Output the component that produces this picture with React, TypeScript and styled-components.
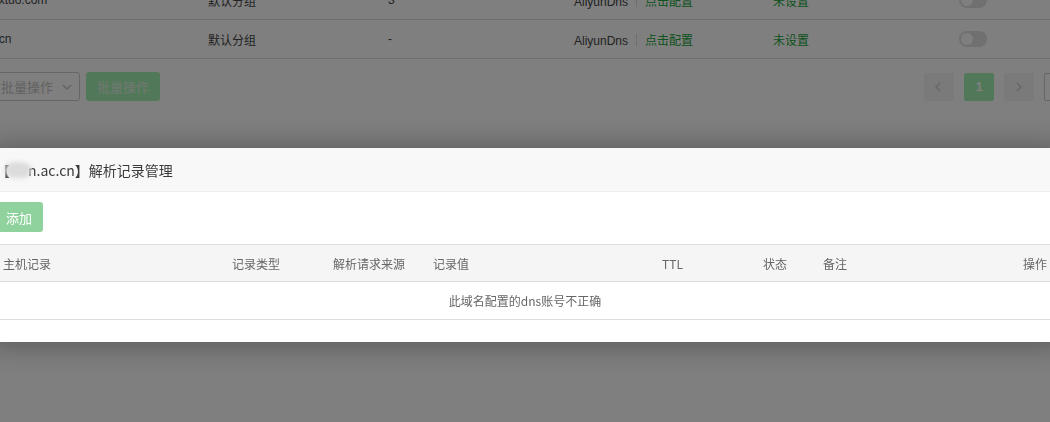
import React from "react";
import styled, { createGlobalStyle } from "styled-components";

const GlobalStyle = createGlobalStyle`
  html, body {
    margin: 0;
    padding: 0;
    background: #fff;
    overflow: hidden;
    font-family: "Liberation Sans", "Noto Sans CJK SC", Arial, sans-serif;
    font-size: 12px;
    color: #555;
  }
`;

const Page = styled.div`
  width: 1050px;
  height: 422px;
  overflow: hidden;
`;

const DomainTable = styled.div`
  margin-top: -19px;
`;

const DomainRow = styled.div`
  display: grid;
  grid-template-columns: 208px 180px 186px 199px 186px 1fr;
  align-items: center;
  height: 38px;
  border-bottom: 1px solid #ddd;
`;

const Cell = styled.div`
  white-space: nowrap;
  color: #444;
`;

const DomainName = styled(Cell)`
  margin-left: -30px;
`;

const Link = styled.span<{ $green?: boolean }>`
  color: ${(p) => (p.$green ? "#20a53a" : "#444")};
`;

const Divider = styled.span`
  display: inline-block;
  width: 1px;
  height: 12px;
  background: #ddd;
  margin: 0 8px;
  vertical-align: -1px;
`;

const Toggle = styled.span`
  display: block;
  position: relative;
  width: 28px;
  height: 16px;
  border-radius: 8px;
  background: #e0e0e0;
  &::after {
    content: "";
    position: absolute;
    left: 2px;
    top: 2px;
    width: 12px;
    height: 12px;
    border-radius: 50%;
    background: #fff;
  }
`;

const Toolbar = styled.div`
  display: flex;
  align-items: center;
  padding-top: 13px;
  height: 29px;
`;

const Select = styled.div`
  display: flex;
  align-items: center;
  justify-content: space-between;
  box-sizing: border-box;
  width: 100px;
  height: 29px;
  margin-left: -20px;
  padding: 0 6px 0 20px;
  border: 1px solid #ccc;
  border-radius: 3px;
  color: #c4c4c4;
  font-size: 13px;
`;

const GreenButton = styled.div`
  display: flex;
  align-items: center;
  justify-content: center;
  width: 74px;
  height: 29px;
  margin-left: 6px;
  border-radius: 3px;
  background: #a2f2b2;
  color: #e4f0e4;
  font-size: 13px;
`;

const Pager = styled.div`
  display: flex;
  gap: 10px;
  margin-left: auto;
  margin-right: -24px;
`;

const PageBox = styled.div<{ $active?: boolean; $outlined?: boolean }>`
  display: flex;
  align-items: center;
  justify-content: center;
  box-sizing: border-box;
  width: 30px;
  height: 28px;
  border-radius: 2px;
  background: ${(p) => (p.$active ? "#a2f2b2" : p.$outlined ? "#fff" : "#f4f4f4")};
  border: ${(p) => (p.$outlined ? "1px solid #ccc" : "none")};
  color: ${(p) => (p.$active ? "#fff" : "#ccc")};
  font-size: 13px;
  font-weight: bold;
`;

const Overlay = styled.div`
  position: fixed;
  inset: 0;
  background: rgba(0, 0, 0, 0.5);
  display: flex;
  flex-direction: column;
`;

const Modal = styled.div`
  margin-top: 148px;
  margin-left: -15px;
  width: 1080px;
  background: #fff;
  box-shadow: 1px 1px 30px rgba(0, 0, 0, 0.35);
  padding-bottom: 22px;
`;

const ModalTitle = styled.div`
  display: flex;
  align-items: center;
  height: 43px;
  padding-left: 11px;
  background: #f8f8f8;
  border-bottom: 1px solid #eee;
  color: #3a3a3a;
  font-size: 14px;
  font-family: "Noto Sans CJK SC", sans-serif;
  white-space: nowrap;
`;

const Masked = styled.span`
  display: inline-block;
  width: 26px;
  height: 16px;
  margin: 0 -3px 0 -5px;
  background: #dcdcdc;
  border-radius: 40%;
  filter: blur(2px);
  vertical-align: -2px;
`;

const ModalBody = styled.div`
  padding: 10px 10px 0;
`;

const AddButton = styled.div`
  display: inline-flex;
  align-items: center;
  height: 30px;
  padding: 0 11px;
  border-radius: 3px;
  background: #90d29d;
  color: #fff;
  font-size: 13px;
  font-family: "Noto Sans CJK SC", sans-serif;
`;

const RecordTable = styled.div`
  margin-top: 12px;
  border-top: 1px solid #ddd;
`;

const HeadRow = styled.div`
  display: grid;
  grid-template-columns: 229px 101px 100px 229px 101px 60px 1fr 80px;
  align-items: center;
  height: 36px;
  background: #f5f5f5;
  border-bottom: 1px solid #ddd;
`;

const HeadCell = styled.div<{ $right?: boolean }>`
  padding: 0 8px;
  color: #666;
  text-align: ${(p) => (p.$right ? "right" : "left")};
  font-family: "Noto Sans CJK SC", sans-serif;
  white-space: nowrap;
`;

const EmptyRow = styled.div`
  height: 37px;
  display: flex;
  align-items: center;
  justify-content: center;
  border-bottom: 1px solid #ddd;
  color: #666;
  font-family: "Noto Sans CJK SC", sans-serif;
`;

const Chevron = ({ dir }: { dir: "left" | "right" | "down" }) => {
  const d =
    dir === "left" ? "M7 2 L3 6 L7 10" : dir === "right" ? "M4 2 L8 6 L4 10" : "M2 4 L6 8 L10 4";
  return (
    <svg width="12" height="12" viewBox="0 0 12 12" fill="none" stroke="currentColor" strokeWidth="1.4">
      <path d={d} />
    </svg>
  );
};

const domains = [
  { name: "www.xtuo.com", value: "3" },
  { name: "www.cn", value: "-" },
];

const columns = ["主机记录", "记录类型", "解析请求来源", "记录值", "TTL", "状态", "备注", "操作"];

export default function App() {
  return (
    <>
      <GlobalStyle />
      <Page>
        <DomainTable>
          {domains.map((d) => (
            <DomainRow key={d.name}>
              <DomainName>{d.name}</DomainName>
              <Cell>默认分组</Cell>
              <Cell>{d.value}</Cell>
              <Cell>
                <Link>AliyunDns</Link>
                <Divider />
                <Link $green>点击配置</Link>
              </Cell>
              <Cell>
                <Link $green>未设置</Link>
              </Cell>
              <Cell>
                <Toggle />
              </Cell>
            </DomainRow>
          ))}
        </DomainTable>
        <Toolbar>
          <Select>
            <span>批量操作</span>
            <Chevron dir="down" />
          </Select>
          <GreenButton>批量操作</GreenButton>
          <Pager>
            <PageBox>
              <Chevron dir="left" />
            </PageBox>
            <PageBox $active>1</PageBox>
            <PageBox>
              <Chevron dir="right" />
            </PageBox>
            <PageBox $outlined />
          </Pager>
        </Toolbar>
      </Page>
      <Overlay>
        <Modal>
          <ModalTitle>
            【<Masked />n.ac.cn】解析记录管理
          </ModalTitle>
          <ModalBody>
            <AddButton>添加</AddButton>
            <RecordTable>
              <HeadRow>
                {columns.map((c, i) => (
                  <HeadCell key={c} $right={i === columns.length - 1}>
                    {c}
                  </HeadCell>
                ))}
              </HeadRow>
              <EmptyRow>此域名配置的dns账号不正确</EmptyRow>
            </RecordTable>
          </ModalBody>
        </Modal>
      </Overlay>
    </>
  );
}
